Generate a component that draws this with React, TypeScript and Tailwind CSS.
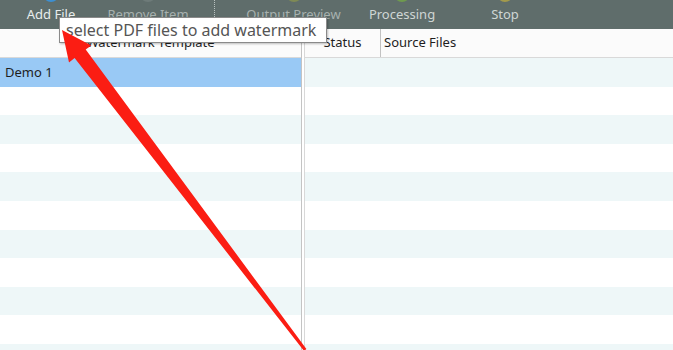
import React from "react";

const rows = Array.from({ length: 11 }, (_, i) => i);

export default function App() {
  return (
    <div
      className="relative w-[673px] h-[350px] overflow-hidden bg-white"
      style={{ fontFamily: '"Noto Sans", "Open Sans", sans-serif' }}
    >
      {/* toolbar */}
      <div className="flex h-[29px] bg-[#5f6d6b] text-[13px] leading-[18px]">
        <div className="w-[102px] flex flex-col items-center">
          <div className="w-[16px] h-[16px] -mt-[14px] rounded-full bg-[#3d8fd1]" />
          <span className="mt-[3px] text-[#e9eded]">Add File</span>
        </div>
        <div className="w-[92px] flex flex-col items-center">
          <div className="w-[16px] h-[16px] -mt-[14px] rounded-full bg-[#6e7b79]" />
          <span className="mt-[3px] text-[#a7b1af]">Remove Item</span>
        </div>
        <div className="w-[20px]" />
        <div className="w-px h-full border-l border-dotted border-[#b9c2c0]" />
        <div className="w-[157px] flex flex-col items-center">
          <div className="w-[16px] h-[16px] -mt-[14px] rounded-full bg-[#7f8a55]" />
          <span className="mt-[3px] text-[#a7b1af]">Output Preview</span>
        </div>
        <div className="w-[60px] flex flex-col items-center">
          <div className="w-[16px] h-[16px] -mt-[14px] rounded-full bg-[#6f9a4e]" />
          <span className="mt-[3px] text-[#cfd6d4]">Processing</span>
        </div>
        <div className="w-[146px] flex flex-col items-center">
          <div className="w-[16px] h-[16px] -mt-[14px] rounded-full bg-[#a39a4c]" />
          <span className="mt-[3px] text-[#cfd6d4]">Stop</span>
        </div>
      </div>

      {/* body */}
      <div className="flex text-[13px] text-[#1e1e1e]">
        {/* left panel */}
        <div className="w-[302px] border-r border-[#c4c4c4]">
          <div className="h-[29px] flex items-center justify-center border-b border-[#d9d9d9] bg-[#fbfbfb]">
            Watermark Template
          </div>
          {rows.map((i) => (
            <div
              key={i}
              className={
                "h-[28.6px] flex items-center pl-[5px] " +
                (i === 0 ? "bg-[#99c9f5]" : i % 2 === 0 ? "bg-[#eef7f8]" : "bg-white")
              }
            >
              {i === 0 ? "Demo 1" : ""}
            </div>
          ))}
        </div>
        <div className="w-[2px] bg-white" />
        {/* right panel */}
        <div className="flex-1 border-l border-[#d8d8d8]">
          <div className="h-[29px] flex items-stretch border-b border-[#d9d9d9] bg-[#fbfbfb]">
            <div className="w-[76px] flex items-center justify-center border-r border-[#c2c2c2]">
              Status
            </div>
            <div className="flex items-center pl-[3px]">Source Files</div>
          </div>
          {rows.map((i) => (
            <div
              key={i}
              className={"h-[28.6px] " + (i % 2 === 0 ? "bg-[#eef7f8]" : "bg-white")}
            />
          ))}
        </div>
      </div>

      {/* tooltip */}
      <div className="absolute left-[59px] top-[17px] w-[268px] h-[26px] bg-white border border-[#8a8a8a] shadow-[1px_1px_2px_rgba(0,0,0,0.25)] flex items-center pl-[6px] text-[16px] text-[#555555] leading-none">
        select PDF files to add watermark
      </div>

      {/* red arrow */}
      <svg className="absolute left-0 top-0 pointer-events-none" width="673" height="350" viewBox="0 0 673 350">
        <polygon
          fill="#fb1d13"
          points="62,30 91.3,45.4 85.7,49.6 306.4,349.1 304,350.9 74.6,58.1 69,62.4"
        />
      </svg>
    </div>
  );
}
